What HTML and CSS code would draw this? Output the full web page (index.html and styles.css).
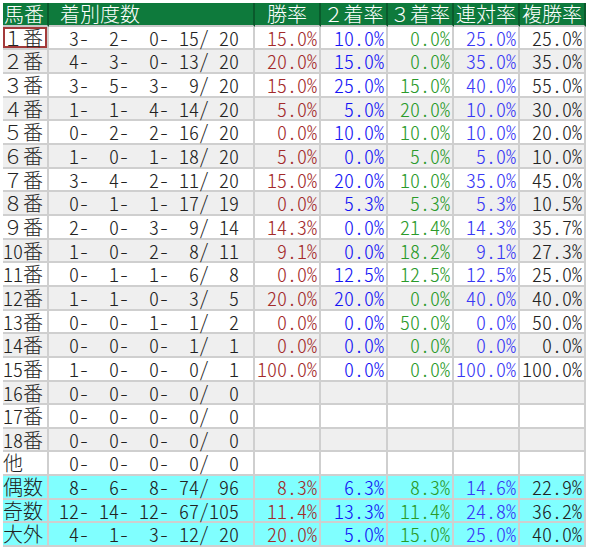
FILE: index.html
```html
<!DOCTYPE html>
<html lang="ja">
<head>
<meta charset="utf-8">
<link rel="stylesheet" href="styles.css">
</head>
<body>
<table class="grid">
<colgroup>
<col class="c-no"><col class="c-rec"><col class="c-p1"><col class="c-p2"><col class="c-p3"><col class="c-p4"><col class="c-p5">
</colgroup>
<thead>
<tr class="hdr"><th class="h-no">馬番</th><th class="h-rec">着別度数</th><th>勝率</th><th>２着率</th><th>３着率</th><th>連対率</th><th>複勝率</th></tr>
</thead>
<tbody>
<tr><td class="no sel">１番</td><td class="rec">  3-  2-  0- 15/ 20</td><td class="p1">15.0%</td><td class="p2">10.0%</td><td class="p3">0.0%</td><td class="p4">25.0%</td><td class="p5">25.0%</td></tr>
<tr class="alt"><td class="no">２番</td><td class="rec">  4-  3-  0- 13/ 20</td><td class="p1">20.0%</td><td class="p2">15.0%</td><td class="p3">0.0%</td><td class="p4">35.0%</td><td class="p5">35.0%</td></tr>
<tr><td class="no">３番</td><td class="rec">  3-  5-  3-  9/ 20</td><td class="p1">15.0%</td><td class="p2">25.0%</td><td class="p3">15.0%</td><td class="p4">40.0%</td><td class="p5">55.0%</td></tr>
<tr class="alt"><td class="no">４番</td><td class="rec">  1-  1-  4- 14/ 20</td><td class="p1">5.0%</td><td class="p2">5.0%</td><td class="p3">20.0%</td><td class="p4">10.0%</td><td class="p5">30.0%</td></tr>
<tr><td class="no">５番</td><td class="rec">  0-  2-  2- 16/ 20</td><td class="p1">0.0%</td><td class="p2">10.0%</td><td class="p3">10.0%</td><td class="p4">10.0%</td><td class="p5">20.0%</td></tr>
<tr class="alt"><td class="no">６番</td><td class="rec">  1-  0-  1- 18/ 20</td><td class="p1">5.0%</td><td class="p2">0.0%</td><td class="p3">5.0%</td><td class="p4">5.0%</td><td class="p5">10.0%</td></tr>
<tr><td class="no">７番</td><td class="rec">  3-  4-  2- 11/ 20</td><td class="p1">15.0%</td><td class="p2">20.0%</td><td class="p3">10.0%</td><td class="p4">35.0%</td><td class="p5">45.0%</td></tr>
<tr class="alt"><td class="no">８番</td><td class="rec">  0-  1-  1- 17/ 19</td><td class="p1">0.0%</td><td class="p2">5.3%</td><td class="p3">5.3%</td><td class="p4">5.3%</td><td class="p5">10.5%</td></tr>
<tr><td class="no">９番</td><td class="rec">  2-  0-  3-  9/ 14</td><td class="p1">14.3%</td><td class="p2">0.0%</td><td class="p3">21.4%</td><td class="p4">14.3%</td><td class="p5">35.7%</td></tr>
<tr class="alt"><td class="no"><span class="hw">10</span>番</td><td class="rec">  1-  0-  2-  8/ 11</td><td class="p1">9.1%</td><td class="p2">0.0%</td><td class="p3">18.2%</td><td class="p4">9.1%</td><td class="p5">27.3%</td></tr>
<tr><td class="no"><span class="hw">11</span>番</td><td class="rec">  0-  1-  1-  6/  8</td><td class="p1">0.0%</td><td class="p2">12.5%</td><td class="p3">12.5%</td><td class="p4">12.5%</td><td class="p5">25.0%</td></tr>
<tr class="alt"><td class="no"><span class="hw">12</span>番</td><td class="rec">  1-  1-  0-  3/  5</td><td class="p1">20.0%</td><td class="p2">20.0%</td><td class="p3">0.0%</td><td class="p4">40.0%</td><td class="p5">40.0%</td></tr>
<tr><td class="no"><span class="hw">13</span>番</td><td class="rec">  0-  0-  1-  1/  2</td><td class="p1">0.0%</td><td class="p2">0.0%</td><td class="p3">50.0%</td><td class="p4">0.0%</td><td class="p5">50.0%</td></tr>
<tr class="alt"><td class="no"><span class="hw">14</span>番</td><td class="rec">  0-  0-  0-  1/  1</td><td class="p1">0.0%</td><td class="p2">0.0%</td><td class="p3">0.0%</td><td class="p4">0.0%</td><td class="p5">0.0%</td></tr>
<tr><td class="no"><span class="hw">15</span>番</td><td class="rec">  1-  0-  0-  0/  1</td><td class="p1">100.0%</td><td class="p2">0.0%</td><td class="p3">0.0%</td><td class="p4">100.0%</td><td class="p5">100.0%</td></tr>
<tr class="alt"><td class="no"><span class="hw">16</span>番</td><td class="rec">  0-  0-  0-  0/  0</td><td class="p1"></td><td class="p2"></td><td class="p3"></td><td class="p4"></td><td class="p5"></td></tr>
<tr><td class="no"><span class="hw">17</span>番</td><td class="rec">  0-  0-  0-  0/  0</td><td class="p1"></td><td class="p2"></td><td class="p3"></td><td class="p4"></td><td class="p5"></td></tr>
<tr class="alt"><td class="no"><span class="hw">18</span>番</td><td class="rec">  0-  0-  0-  0/  0</td><td class="p1"></td><td class="p2"></td><td class="p3"></td><td class="p4"></td><td class="p5"></td></tr>
<tr><td class="no">他</td><td class="rec">  0-  0-  0-  0/  0</td><td class="p1"></td><td class="p2"></td><td class="p3"></td><td class="p4"></td><td class="p5"></td></tr>
<tr class="sum"><td class="no">偶数</td><td class="rec">  8-  6-  8- 74/ 96</td><td class="p1">8.3%</td><td class="p2">6.3%</td><td class="p3">8.3%</td><td class="p4">14.6%</td><td class="p5">22.9%</td></tr>
<tr class="sum"><td class="no">奇数</td><td class="rec"> 12- 14- 12- 67/105</td><td class="p1">11.4%</td><td class="p2">13.3%</td><td class="p3">11.4%</td><td class="p4">24.8%</td><td class="p5">36.2%</td></tr>
<tr class="sum"><td class="no">大外</td><td class="rec">  4-  1-  3- 12/ 20</td><td class="p1">20.0%</td><td class="p2">5.0%</td><td class="p3">15.0%</td><td class="p4">25.0%</td><td class="p5">40.0%</td></tr>
</tbody>
</table>
</body>
</html>
```

FILE: styles.css
```css
html, body {
  margin: 0;
  padding: 0;
  background: #ffffff;
}
body {
  padding: 3px 0 0 3px;
  font-family: "Noto Sans CJK JP", "Noto Sans", sans-serif;
  font-size: 20px;
  color: #222222;
}
.grid {
  border-collapse: separate;
  border-spacing: 0;
  table-layout: fixed;
  width: 583px;
}
.c-no { width: 46px; }
.c-rec { width: 206px; }
.c-p1 { width: 66px; }
.c-p2 { width: 67px; }
.c-p3 { width: 66px; }
.c-p4 { width: 66px; }
.c-p5 { width: 66px; }
.grid th, .grid td {
  box-sizing: border-box;
  padding: 0;
  height: 23.65px;
  line-height: 21.65px;
  font-weight: 300;
  white-space: pre;
  border-right: 2px solid #cfcfcf;
  border-bottom: 2px solid #cfcfcf;
}
.hdr th {
  background: #0e7a3c;
  color: #ffffff;
  text-align: center;
  border-right-color: #0a5a2c;
  border-bottom-color: #c8c8c8;
}
.hdr .h-no { text-align: left; padding-left: 1px; }
.hdr .h-rec { text-align: left; padding-left: 11px; }
.alt td { background: #efefef; }
.sum td { background: #80ffff; }
.no {
  text-align: left;
  padding-left: 1px;
}
.hw, .rec, .p1, .p2, .p3, .p4, .p5 {
  font-feature-settings: "hwid" 1;
}
.rec {
  text-align: right;
  padding-right: 14px !important;
}
.p1, .p2, .p3, .p4, .p5 {
  text-align: right;
  padding-right: 2px !important;
}
.p1 { color: #a32a2a; }
.p2 { color: #1414f5; }
.p3 { color: #2a9a2a; }
.p4 { color: #3838f5; }
.p5 { color: #222222; }
.sel { box-shadow: inset 0 0 0 2px #a33a3a; }
```
